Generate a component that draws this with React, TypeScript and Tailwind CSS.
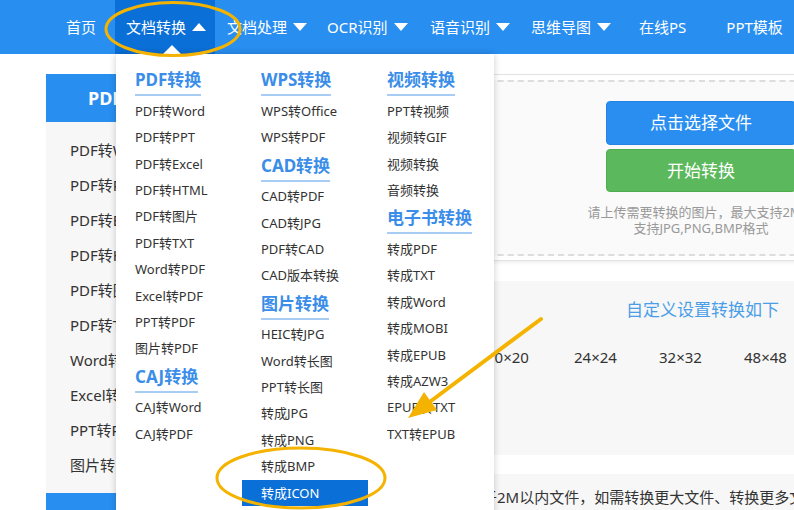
import React from "react";

type Entry = string | { h: string } | { a: string };

const col1: Entry[] = [
  { h: "PDF转换" },
  "PDF转Word",
  "PDF转PPT",
  "PDF转Excel",
  "PDF转HTML",
  "PDF转图片",
  "PDF转TXT",
  "Word转PDF",
  "Excel转PDF",
  "PPT转PDF",
  "图片转PDF",
  { h: "CAJ转换" },
  "CAJ转Word",
  "CAJ转PDF",
];
const col2: Entry[] = [
  { h: "WPS转换" },
  "WPS转Office",
  "WPS转PDF",
  { h: "CAD转换" },
  "CAD转PDF",
  "CAD转JPG",
  "PDF转CAD",
  "CAD版本转换",
  { h: "图片转换" },
  "HEIC转JPG",
  "Word转长图",
  "PPT转长图",
  "转成JPG",
  "转成PNG",
  "转成BMP",
  { a: "转成ICON" },
];
const col3: Entry[] = [
  { h: "视频转换" },
  "PPT转视频",
  "视频转GIF",
  "视频转换",
  "音频转换",
  { h: "电子书转换" },
  "转成PDF",
  "转成TXT",
  "转成Word",
  "转成MOBI",
  "转成EPUB",
  "转成AZW3",
  "EPUB转TXT",
  "TXT转EPUB",
];

const Tri = ({ up }: { up?: boolean }) => (
  <svg width="14" height="8" viewBox="0 0 14 8" className="shrink-0">
    <polygon points={up ? "0,8 14,8 7,0" : "0,0 14,0 7,8"} fill="white" />
  </svg>
);

function Column({ items }: { items: Entry[] }) {
  return (
    <div className="w-[126px] shrink-0 flex flex-col">
      {items.map((it, i) => {
        if (typeof it === "string") {
          return (
            <div key={i} className="h-[26.4px] leading-[26.4px] pl-[19px] text-[13px] text-[#333] whitespace-nowrap">
              {it}
            </div>
          );
        }
        if ("h" in it) {
          return (
            <div key={i} className="h-[32.6px] pl-[19px] pt-[3px]">
              <div className="inline-block text-[17px] leading-[24px] font-bold text-[#3a8de8] pb-[2px] border-b-2 border-[#a8cdf5] whitespace-nowrap">
                {it.h}
              </div>
            </div>
          );
        }
        return (
          <div key={i} className="h-[26.4px] leading-[26.4px] pl-[19px] text-[13px] text-white bg-[#0a6fd6] whitespace-nowrap">
            {it.a}
          </div>
        );
      })}
    </div>
  );
}

const sideItems = [
  "PDF转Word",
  "PDF转PPT",
  "PDF转Excel",
  "PDF转HTML",
  "PDF转图片",
  "PDF转TXT",
  "Word转PDF",
  "Excel转PDF",
  "PPT转PDF",
  "图片转PDF",
];

export default function App() {
  return (
    <div className="relative w-[794px] h-[510px] overflow-hidden bg-white font-['Noto_Sans','Noto_Sans_CJK_SC',sans-serif]">
      {/* Nav */}
      <div className="h-[54px] bg-[#288ef0] flex items-stretch pl-[46px] text-white text-[15px] whitespace-nowrap">
        <div className="shrink-0 flex items-center pl-[20px] pr-[19px]">首页</div>
        <div className="shrink-0 flex items-center w-[100px] pl-[11px] gap-[6px] bg-[#0a6fd6]">
          <span>文档转换</span>
          <Tri up />
        </div>
        <div className="shrink-0 flex items-center w-[100px] pl-[12px] gap-[6px]">
          <span>文档处理</span>
          <Tri />
        </div>
        <div className="shrink-0 flex items-center w-[103px] pl-[12px] gap-[6px]">
          <span>OCR识别</span>
          <Tri />
        </div>
        <div className="shrink-0 flex items-center w-[101px] pl-[12px] gap-[6px]">
          <span>语音识别</span>
          <Tri />
        </div>
        <div className="shrink-0 flex items-center w-[100px] pl-[12px] gap-[6px]">
          <span>思维导图</span>
          <Tri />
        </div>
        <div className="shrink-0 flex items-center px-[20px]">在线PS</div>
        <div className="shrink-0 flex items-center px-[20px]">PPT模板</div>
      </div>

      {/* Body */}
      <div className="flex pl-[46px]">
        {/* Sidebar */}
        <div className="w-[190px] shrink-0 mt-[20px]">
          <div className="h-[48px] bg-[#288ef0] flex items-center pl-[42px] text-white font-bold text-[18px]">
            PDF转换
          </div>
          <div className="bg-[#f7f7f7] pt-[10.5px] pb-[10.5px]">
            {sideItems.map((s) => (
              <div key={s} className="h-[35px] leading-[35px] pl-[24px] text-[15px] text-[#333] whitespace-nowrap">
                {s}
              </div>
            ))}
          </div>
          <div className="h-[48px] bg-[#288ef0]" />
        </div>

        {/* Main */}
        <div className="ml-[20px] w-[600px] shrink-0 mt-[20px]">
          <div className="border-t border-b border-[#e2e2e2] pt-[5px] pb-[4px] shadow-[0_2px_3px_rgba(0,0,0,0.06)]">
            <div className="border-y-2 border-dashed border-[#dddddd] bg-[#fafafa] pt-[19px] pb-[18px] pl-[350px]">
              <div className="w-[190px] flex flex-col gap-[4px]">
                <div className="h-[44px] rounded-[4px] bg-[#2a8ef0] border border-[#2384e4] flex items-center justify-center text-white text-[17px]">
                  点击选择文件
                </div>
                <div className="h-[43px] rounded-[4px] bg-[#5cb85c] border border-[#4cae4c] flex items-center justify-center text-white text-[17px]">
                  开始转换
                </div>
              </div>
              <div className="w-[190px] mt-[12px] flex flex-col items-center text-[13px] leading-[16px] text-[#999] whitespace-nowrap">
                <div>请上传需要转换的图片，最大支持2M，</div>
                <div>支持JPG,PNG,BMP格式</div>
              </div>
            </div>
          </div>

          <div className="mt-[20px] h-[174px] bg-[#f7f7f7] pt-[17px]">
            <div className="pl-[370px] text-[17px] leading-[24px] text-[#4a9ee8] whitespace-nowrap">
              自定义设置转换如下
            </div>
            <div className="mt-[23px] flex pl-[145px] text-[15px] leading-[24px] text-[#333] whitespace-nowrap">
              <div className="w-[85px] shrink-0">16×16</div>
              <div className="w-[88px] shrink-0">20×20</div>
              <div className="w-[85px] shrink-0">24×24</div>
              <div className="w-[85px] shrink-0">32×32</div>
              <div className="w-[85px] shrink-0">48×48</div>
              <div className="w-[85px] shrink-0">64×64</div>
            </div>
          </div>

          <div className="mt-[19px] h-[60px] bg-[#f7f7f7] pt-[11px] pl-[166px] text-[15px] leading-[24px] text-[#333] whitespace-nowrap">
            仅支持小于2M以内文件，如需转换更大文件、转换更多文件，请开通会员
          </div>
        </div>
      </div>

      {/* Dropdown caret */}
      <svg className="absolute left-[162px] top-[45px] z-20" width="20" height="10" viewBox="0 0 20 10">
        <polygon points="0,10 20,10 10,0" fill="white" />
      </svg>

      {/* Dropdown */}
      <div className="absolute left-[116px] top-[54px] w-[378px] h-[480px] bg-white z-10 shadow-[0_0_7px_rgba(0,0,0,0.2)] pt-[11.2px] flex">
        <Column items={col1} />
        <Column items={col2} />
        <Column items={col3} />
      </div>

      {/* Annotations */}
      <svg className="absolute inset-0 z-30 pointer-events-none" width="794" height="510" viewBox="0 0 794 510">
        <ellipse cx="173" cy="29" rx="67" ry="26.5" fill="none" stroke="#f5b301" strokeWidth="3" />
        <ellipse cx="301" cy="478" rx="84" ry="30" fill="none" stroke="#f5b301" strokeWidth="3" />
        <line x1="541" y1="319" x2="431" y2="401" stroke="#f5b301" strokeWidth="4" strokeLinecap="round" />
        <polygon points="408,418 437,410 424,392" fill="#f5b301" />
      </svg>
    </div>
  );
}
